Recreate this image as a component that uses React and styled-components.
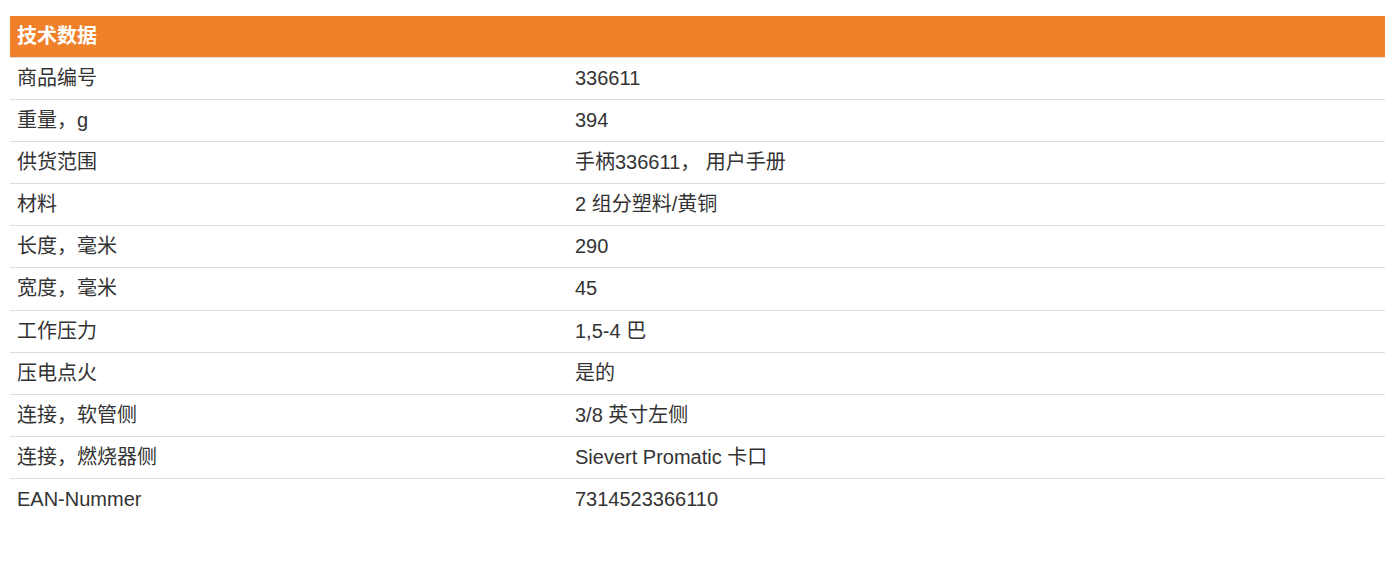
import React from 'react'
import styled, { createGlobalStyle } from 'styled-components'

const rows = [
  ['商品编号', '336611'],
  ['重量，g', '394'],
  ['供货范围', '手柄336611， 用户手册'],
  ['材料', '2 组分塑料/黄铜'],
  ['长度，毫米', '290'],
  ['宽度，毫米', '45'],
  ['工作压力', '1,5-4 巴'],
  ['压电点火', '是的'],
  ['连接，软管侧', '3/8 英寸左侧'],
  ['连接，燃烧器侧', 'Sievert Promatic 卡口'],
  ['EAN-Nummer', '7314523366110'],
]

const App = () => (
  <>
    <GlobalStyle />
    <Page>
      <SpecTable>
        <Header>技术数据</Header>
        {rows.map(([label, value]) => (
          <Row key={label}>
            <Cell>{label}</Cell>
            <Cell>{value}</Cell>
          </Row>
        ))}
      </SpecTable>
    </Page>
  </>
)

export default App

const GlobalStyle = createGlobalStyle`
  body {
    margin: 0;
    background: #fff;
    font-family: "Liberation Sans", Arial, "Noto Sans CJK SC", sans-serif;
  }
`

const Page = styled.div`
  padding: 16px 0 0 10px;
`

const SpecTable = styled.div`
  display: flex;
  flex-direction: column;
`

const Header = styled.div`
  height: 41px;
  line-height: 41px;
  padding-left: 7px;
  background: #f0802a;
  color: #fff;
  font-size: 20px;
  font-weight: 700;
`

const Row = styled.div`
  display: grid;
  grid-template-columns: 558px 1fr;
  height: 41.1px;
  border-top: 1px solid #dcdcdc;
  color: #333;
  font-size: 20px;
`

const Cell = styled.div`
  padding-left: 7px;
  line-height: 41px;
  white-space: nowrap;
`
